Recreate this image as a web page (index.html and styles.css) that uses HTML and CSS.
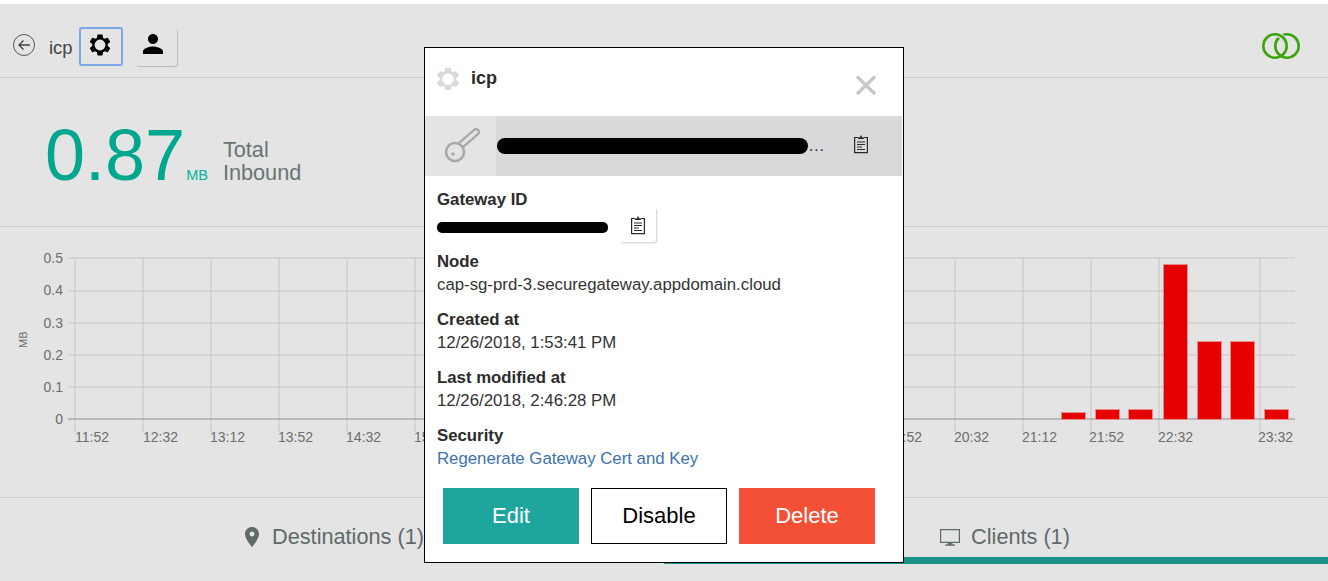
FILE: index.html
```html
<!DOCTYPE html>
<html lang="en">
<head>
    <meta charset="UTF-8">
    <meta name="viewport" content="width=device-width, initial-scale=1.0">
    <title>icp gateway</title>
    <link rel="stylesheet" href="styles.css">
</head>
<body>

    <svg class="defs">
        <symbol id="gear" viewBox="0 0 24 24">
            <path fill-rule="evenodd" d="M19.14 12.94c.04-.3.06-.61.06-.94 0-.32-.02-.64-.07-.94l2.03-1.58c.18-.14.23-.41.12-.61l-1.92-3.32c-.12-.22-.37-.29-.59-.22l-2.39.96c-.5-.38-1.03-.7-1.62-.94l-.36-2.54c-.04-.24-.24-.41-.48-.41h-3.84c-.24 0-.43.17-.47.41l-.36 2.54c-.59.24-1.13.57-1.62.94l-2.39-.96c-.22-.08-.47 0-.59.22L2.74 8.87c-.12.21-.08.47.12.61l2.03 1.58c-.05.3-.09.63-.09.94s.02.64.07.94l-2.03 1.58c-.18.14-.23.41-.12.61l1.92 3.32c.12.22.37.29.59.22l2.39-.96c.5.38 1.03.7 1.62.94l.36 2.54c.05.24.24.41.48.41h3.84c.24 0 .44-.17.47-.41l.36-2.54c.59-.24 1.13-.56 1.62-.94l2.39.96c.22.08.47 0 .59-.22l1.92-3.32c.12-.22.07-.47-.12-.61l-2.01-1.58zM12 17a5 5 0 1 1 0-10 5 5 0 0 1 0 10z"/>
        </symbol>
        <symbol id="clipboard" viewBox="0 0 16 20">
            <path fill="none" stroke="#2b2b2b" stroke-width="1.2" d="M5 3.5H1.6v15.2h12.8V3.5H11"/>
            <path fill="#2b2b2b" d="M5 5V3.4h1.6L8 1l1.4 2.4H11V5z"/>
            <path stroke="#2b2b2b" stroke-width="1.2" d="M4 8h8M4 10.5h8M4 13h5M4 15.5h8"/>
        </symbol>
    </svg>

    <div class="page">
        <header class="topbar">
            <svg class="back-icon" width="24" height="24" viewBox="0 0 24 24">
                <circle cx="12" cy="12" r="10.5" fill="none" stroke="#555" stroke-width="1"/>
                <path d="M18 12H7M11.5 7.5 7 12l4.5 4.5" fill="none" stroke="#444" stroke-width="1.4"/>
            </svg>
            <span class="gateway-name">icp</span>
            <button class="icon-btn focused">
                <svg width="26" height="26"><use href="#gear"/></svg>
            </button>
            <button class="icon-btn raised">
                <svg width="30" height="30" viewBox="0 0 24 24"><path d="M12 12c2.21 0 4-1.79 4-4s-1.79-4-4-4-4 1.79-4 4 1.79 4 4 4zm0 2c-2.67 0-8 1.34-8 4v2h16v-2c0-2.66-5.33-4-8-4z"/></svg>
            </button>
            <svg class="logo" width="38" height="26" viewBox="0 0 38 26">
                <g fill="none" stroke="#3ca40c" stroke-width="2.6">
                    <circle cx="13" cy="13" r="11.7"/>
                    <circle cx="25" cy="13" r="11.7"/>
                    <path stroke="#e4e4e4" stroke-width="5" d="M13 1.3A11.7 11.7 0 0 1 21 4.5"/>
                    <path d="M12 1.3A11.7 11.7 0 0 1 22 5.5"/>
                </g>
            </svg>
        </header>

        <section class="stats">
            <span class="stat-value">0.87</span>
            <span class="stat-unit">MB</span>
            <span class="stat-label">Total<br>Inbound</span>
        </section>

        <section class="chart">
            <svg width="1328" height="270" viewBox="0 227 1328 270">
                <g class="grid">
                    <path d="M68 258H1295M68 291H1295M68 323H1295M68 355H1295M68 387H1295"/>
                    <path d="M75 258V432M143 258V432M211 258V432M279 258V432M347 258V432M415 258V432M955 258V432M1023 258V432M1091 258V432M1159 258V432M1260 258V432"/>
                </g>
                <path class="axis" d="M68 419H1295"/>
                <g class="bars">
                    <rect x="1061.5" y="412.5" width="24" height="7"/>
                    <rect x="1095.5" y="409.5" width="24" height="10"/>
                    <rect x="1128.5" y="409.5" width="24" height="10"/>
                    <rect x="1163.5" y="264.5" width="24" height="155"/>
                    <rect x="1197.5" y="341.5" width="24" height="78"/>
                    <rect x="1230.5" y="341.5" width="24" height="78"/>
                    <rect x="1264.5" y="409.5" width="24" height="10"/>
                </g>
                <g class="y-labels">
                    <text x="63" y="263">0.5</text>
                    <text x="63" y="295">0.4</text>
                    <text x="63" y="328">0.3</text>
                    <text x="63" y="360">0.2</text>
                    <text x="63" y="392">0.1</text>
                    <text x="63" y="424">0</text>
                </g>
                <g class="x-labels">
                    <text x="75" y="442">11:52</text>
                    <text x="143" y="442">12:32</text>
                    <text x="210" y="442">13:12</text>
                    <text x="278" y="442">13:52</text>
                    <text x="346" y="442">14:32</text>
                    <text x="414" y="442">15:12</text>
                    <text x="887" y="442">19:52</text>
                    <text x="954" y="442">20:32</text>
                    <text x="1022" y="442">21:12</text>
                    <text x="1089" y="442">21:52</text>
                    <text x="1158" y="442">22:32</text>
                    <text x="1258" y="442">23:32</text>
                </g>
                <text class="y-title" transform="translate(27 348) rotate(-90)">MB</text>
            </svg>
        </section>

        <nav class="tabs">
            <div class="tab tab-destinations">
                <svg width="24" height="24" viewBox="0 0 24 24"><path fill="#5f6b6b" d="M12 2C8.13 2 5 5.13 5 9c0 5.25 7 13 7 13s7-7.75 7-13c0-3.87-3.13-7-7-7zm0 9.5a2.5 2.5 0 0 1 0-5 2.5 2.5 0 0 1 0 5z"/></svg>
                <span>Destinations (1)</span>
            </div>
            <div class="tab tab-clients active">
                <svg width="22" height="20" viewBox="0 0 22 20">
                    <path fill="none" stroke="#5f6b6b" stroke-width="1.2" d="M1.6 2.6h18.8v12.8H1.6z"/>
                    <path fill="#5f6b6b" d="M9 15.5h4l.6 2H16v1.2H6v-1.2h2.4z"/>
                </svg>
                <span>Clients (1)</span>
            </div>
        </nav>
    </div>

    <div class="modal">
        <div class="modal-head">
            <svg class="modal-gear" width="28" height="28"><use href="#gear"/></svg>
            <span class="modal-title">icp</span>
            <svg class="modal-close" width="24" height="24" viewBox="0 0 24 24">
                <path d="M3 3.5 21 21M21 3.5 3 21" stroke="#c8c8c8" stroke-width="3.4"/>
            </svg>
        </div>

        <div class="key-row">
            <div class="key-cell">
                <svg width="40" height="40" viewBox="0 0 40 40">
                    <path class="key-shaft" d="M20 19 35 6"/>
                    <path class="key-slot" d="M20 19 35 6"/>
                    <circle class="key-head" cx="14" cy="26" r="9"/>
                    <circle cx="12" cy="28" r="1.8" fill="#a8a8a8"/>
                </svg>
            </div>
            <div class="key-value">
                <span class="redacted redacted-key"></span><span>…</span>
            </div>
            <svg class="copy-icon" width="16" height="20"><use href="#clipboard"/></svg>
        </div>

        <div class="modal-body">
            <div class="field">
                <div class="field-label">Gateway ID</div>
                <div class="field-value id-row">
                    <span class="redacted redacted-id"></span>
                    <button class="copy-btn">
                        <svg width="16" height="20"><use href="#clipboard"/></svg>
                    </button>
                </div>
            </div>
            <div class="field">
                <div class="field-label">Node</div>
                <div class="field-value">cap-sg-prd-3.securegateway.appdomain.cloud</div>
            </div>
            <div class="field">
                <div class="field-label">Created at</div>
                <div class="field-value">12/26/2018, 1:53:41 PM</div>
            </div>
            <div class="field">
                <div class="field-label">Last modified at</div>
                <div class="field-value">12/26/2018, 2:46:28 PM</div>
            </div>
            <div class="field">
                <div class="field-label">Security</div>
                <a class="field-link" href="#">Regenerate Gateway Cert and Key</a>
            </div>
        </div>

        <div class="modal-actions">
            <button class="action edit">Edit</button>
            <button class="action disable">Disable</button>
            <button class="action delete">Delete</button>
        </div>
    </div>

</body>
</html>
```

FILE: styles.css
```css
html, body {
    margin: 0;
    padding: 0;
    height: 581px;
    overflow: hidden;
}

body {
    font-family: "Liberation Sans", Arial, sans-serif;
    background: #e4e4e4;
    position: relative;
}

.defs {
    display: none;
}

.page {
    margin-top: 4px;
    box-shadow: 0 -4px 0 #fff;
}

.topbar {
    height: 73px;
    border-bottom: 1px solid #cdcdcd;
    display: flex;
    align-items: center;
    padding: 0 28px 0 12px;
}

.back-icon {
    flex: none;
    margin-top: 9px;
}

.gateway-name {
    font-size: 18.5px;
    color: #444;
    margin: 15px 6px 0 13px;
}

.icon-btn {
    background: transparent;
    border: 0;
    padding: 0;
    display: flex;
    align-items: center;
    justify-content: center;
}

.focused {
    width: 44px;
    height: 39px;
    border: 2px solid #7da7e8;
    border-radius: 3px;
    box-sizing: border-box;
    padding: 0 2px 4px 0;
    margin-top: 12px;
}

.raised {
    width: 42px;
    height: 38px;
    margin: 13px 0 0 12px;
    border-radius: 3px;
    box-shadow: 1px 1px 1px rgba(0, 0, 0, 0.18);
    padding: 0 0 6px 3px;
    box-sizing: border-box;
    justify-content: flex-start;
}

.logo {
    margin-left: auto;
    margin-top: 11px;
}

.stats {
    height: 148px;
    border-bottom: 1px solid #cdcdcd;
    display: flex;
    align-items: flex-end;
    padding-left: 46px;
}

.stat-value {
    font-size: 72px;
    line-height: 72px;
    color: #00a78f;
    margin: 0 0 35px -1px;
}

.stat-unit {
    font-size: 14.5px;
    line-height: 16px;
    color: #00b4a0;
    margin: 0 0 43px 1px;
}

.stat-label {
    font-size: 21.7px;
    line-height: 23px;
    color: #6b7474;
    margin: 0 0 42px 15px;
}

.chart {
    height: 270px;
    border-bottom: 1px solid #cdcdcd;
}

.chart svg {
    display: block;
}

.grid path {
    fill: none;
    stroke: #c6c6c6;
    stroke-width: 1;
}

.axis {
    stroke: #8f8f8f;
    stroke-width: 1;
}

.bars rect {
    fill: #e60000;
    stroke: #ea8a8a;
    stroke-width: 1;
}

.y-labels text,
.x-labels text {
    font-size: 14px;
    fill: #6e6e6e;
}

.y-labels text {
    text-anchor: end;
}

.y-title {
    font-size: 11px;
    fill: #6e6e6e;
}

.tabs {
    display: grid;
    grid-template-columns: 1fr 1fr;
}

.tab {
    height: 41px;
    padding-top: 18px;
    border-bottom: 7px solid transparent;
    display: flex;
    align-items: center;
    justify-content: center;
    font-size: 21.7px;
    color: #5f6b6b;
}

.tab.active {
    border-bottom-color: #1c9389;
}

.tab-destinations {
    gap: 8px;
}

.tab-clients {
    gap: 10px;
    padding-left: 17px;
}

.modal {
    position: absolute;
    left: 424px;
    top: 47px;
    width: 480px;
    height: 516px;
    box-sizing: border-box;
    border: 1px solid #000;
    background: #fff;
}

.modal-head {
    height: 68px;
    display: flex;
    align-items: center;
    padding: 0 25px 7px 9px;
    box-sizing: border-box;
}

.modal-gear {
    fill: #d8d9da;
}

.modal-title {
    font-size: 18px;
    font-weight: bold;
    color: #2b2b2b;
    margin-left: 9px;
}

.modal-close {
    margin: 13px 0 0 auto;
}

.key-row {
    height: 60px;
    width: 477px;
    background: #d8d9da;
    display: flex;
    align-items: center;
}

.key-cell {
    width: 71px;
    height: 100%;
    background: #e4e4e4;
    display: flex;
    align-items: center;
    justify-content: center;
}

.key-shaft {
    fill: none;
    stroke: #a8a8a8;
    stroke-width: 8;
    stroke-linecap: round;
}

.key-slot {
    fill: none;
    stroke: #e4e4e4;
    stroke-width: 3.5;
    stroke-linecap: round;
}

.key-head {
    fill: #e4e4e4;
    stroke: #a8a8a8;
    stroke-width: 2.6;
}

.key-value {
    display: flex;
    align-items: center;
    font-size: 16.8px;
    color: #333;
    margin-left: 1px;
}

.redacted {
    display: block;
    background: #000;
    border-radius: 8px;
}

.redacted-key {
    width: 311px;
    height: 16px;
}

.copy-icon {
    margin: 0 0 4px 28px;
}

.modal-body {
    padding: 12px 0 0 12px;
}

.field {
    margin-bottom: 12px;
    line-height: 23px;
    font-size: 16.8px;
    color: #333;
}

.field-label {
    font-weight: bold;
    color: #2b2b2b;
}

.id-row {
    display: flex;
    align-items: center;
    height: 27px;
}

.redacted-id {
    width: 171px;
    height: 11px;
    border-radius: 5px;
    margin-top: 6px;
}

.copy-btn {
    width: 36px;
    height: 34px;
    margin: 1px 0 0 12px;
    padding: 0;
    border: 0;
    background: #fff;
    border-radius: 2px;
    box-shadow: 1px 1px 2px rgba(0, 0, 0, 0.2);
    display: flex;
    align-items: center;
    justify-content: center;
}

.field-link {
    color: #3b73af;
    text-decoration: none;
}

.modal-actions {
    display: flex;
    gap: 12px;
    padding: 6px 0 0 18px;
}

.action {
    width: 136px;
    height: 56px;
    font-family: inherit;
    font-size: 22px;
    border: 0;
    padding: 0;
    color: #fff;
}

.edit {
    background: #1ea69e;
}

.disable {
    background: #fff;
    color: #000;
    border: 1px solid #000;
}

.delete {
    background: #f35036;
}
```
